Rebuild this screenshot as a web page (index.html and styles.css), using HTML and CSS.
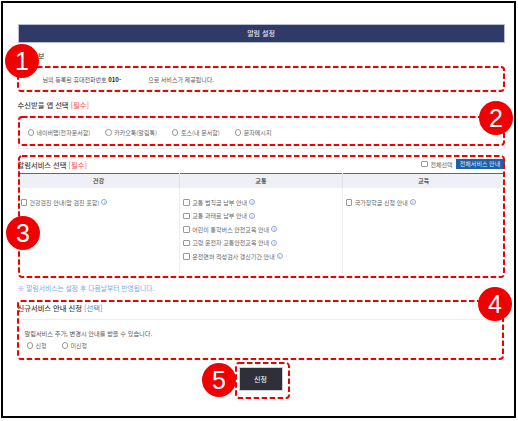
FILE: index.html
```html
<!DOCTYPE html>
<html lang="ko">
<head>
    <meta charset="UTF-8">
    <meta name="viewport" content="width=device-width, initial-scale=1.0">
    <title>알림 설정</title>
    <link rel="stylesheet" href="styles.css">
</head>
<body>

    <div class="frame">
        <h2 class="page-title">알림 설정</h2>

        <h3 class="sec-title first">기본정보</h3>
        <div class="info-box">
            님의 등록된 휴대전화번호 <b>010-</b><span class="phone-gap"></span>으로 서비스가 제공됩니다.
        </div>

        <h3 class="sec-title app">수신받을 앱 선택 <span class="red">[필수]</span></h3>
        <div class="app-box">
            <label class="opt"><input type="radio" name="app">네이버앱(전자문서함)</label>
            <label class="opt"><input type="radio" name="app">카카오톡(알림톡)</label>
            <label class="opt"><input type="radio" name="app">토스(내 문서함)</label>
            <label class="opt"><input type="radio" name="app">문자메시지</label>
        </div>

        <div class="service-head">
            <h3 class="sec-title">알림서비스 선택 <span class="red">[필수]</span></h3>
            <div class="service-tools">
                <label class="opt"><input type="checkbox">전체선택</label>
                <button class="guide-btn">전체서비스 안내</button>
            </div>
        </div>
        <table class="service-table">
            <thead>
                <tr>
                    <th>건강</th>
                    <th>교통</th>
                    <th>교육</th>
                </tr>
            </thead>
            <tbody>
                <tr>
                    <td>
                        <label class="item"><input type="checkbox">건강검진 안내(암 검진 포함) <i class="info">i</i></label>
                    </td>
                    <td>
                        <label class="item"><input type="checkbox">교통 범칙금 납부 안내 <i class="info">i</i></label>
                        <label class="item"><input type="checkbox">교통 과태료 납부 안내 <i class="info">i</i></label>
                        <label class="item"><input type="checkbox">어린이 통학버스 안전교육 안내 <i class="info">i</i></label>
                        <label class="item"><input type="checkbox">고령 운전자 교통안전교육 안내 <i class="info">i</i></label>
                        <label class="item"><input type="checkbox">운전면허 적성검사 갱신기간 안내 <i class="info">i</i></label>
                    </td>
                    <td>
                        <label class="item"><input type="checkbox">국가장학금 신청 안내 <i class="info">i</i></label>
                    </td>
                </tr>
            </tbody>
        </table>
        <p class="notice">※ 알림서비스는 설정 후 다음날부터 반영됩니다.</p>

        <h3 class="sec-title new-title">신규서비스 안내 신청 <span class="blue">[선택]</span></h3>
        <div class="new-box">
            <p class="new-text">알림서비스 추가, 변경시 안내를 받을 수 있습니다.</p>
            <div class="new-opts">
                <label class="opt"><input type="radio" name="news">신청</label>
                <label class="opt"><input type="radio" name="news">미신청</label>
            </div>
        </div>

        <div class="submit-row">
            <button class="submit-btn">신청</button>
        </div>

        <!-- annotations drawn over the screen -->
        <svg class="mark mark1"><rect></rect></svg>
        <svg class="mark mark2"><rect></rect></svg>
        <svg class="mark mark3"><rect></rect></svg>
        <svg class="mark mark4"><rect></rect></svg>
        <svg class="mark mark5"><rect></rect></svg>
        <div class="badge badge1">1</div>
        <div class="badge badge2">2</div>
        <div class="badge badge3">3</div>
        <div class="badge badge4">4</div>
        <div class="badge badge5">5</div>
    </div>

</body>
</html>
```

FILE: styles.css
```css
* {
    box-sizing: border-box;
}
html, body {
    margin: 0;
    padding: 0;
    background: white;
}
body {
    font-family: "Noto Sans CJK KR", "Noto Sans", sans-serif;
    color: #555;
    font-size: 6px;
    width: 518px;
    height: 421px;
    overflow: hidden;
    padding: 1px 0 0 1px;
}
.frame {
    position: relative;
    width: 515px;
    height: 417px;
    border: 2px solid black;
    padding: 21px 9.5px 0 14.5px;
}
.page-title {
    margin: 0;
    height: 19px;
    line-height: 17px;
    background: #303a66;
    border: 1px solid #b9bfd2;
    color: #e8e9f0;
    font-size: 7px;
    font-weight: 500;
    text-align: center;
}
.sec-title {
    margin: 0;
    font-size: 7.3px;
    line-height: 11px;
    font-weight: 500;
    color: #444;
}
.sec-title.first {
    margin-top: 8px;
}
.sec-title.app {
    margin-top: 10px;
}
.red {
    color: #f0524f;
    font-weight: 400;
}
.blue {
    color: #4d86cf;
    font-weight: 400;
}
.info-box {
    margin-top: 5px;
    height: 23px;
    line-height: 23px;
    padding-left: 24px;
    border: 1px solid #f0f0f0;
    color: #555;
}
.info-box b {
    color: #222;
}
.phone-gap {
    display: inline-block;
    width: 27px;
}
.app-box {
    margin-top: 5px;
    height: 33px;
    border: 1px solid #eee;
    padding-left: 9px;
    display: flex;
    align-items: center;
    gap: 15px;
}
.opt {
    display: flex;
    align-items: center;
    color: #666;
    white-space: nowrap;
}
input[type="radio"], input[type="checkbox"] {
    appearance: none;
    margin: 0 2.5px 0 0;
    width: 6.5px;
    height: 6.5px;
    border: 0.7px solid #999;
    background: white;
    flex: none;
}
input[type="radio"] {
    border-radius: 50%;
}
input[type="checkbox"] {
    border-radius: 1px;
}
.service-head {
    margin-top: 6px;
    height: 18px;
    display: flex;
    justify-content: space-between;
    align-items: flex-start;
    padding-top: 5px;
}
.service-tools {
    display: flex;
    align-items: center;
    gap: 3px;
    margin-top: -1px;
}
.guide-btn {
    width: 49px;
    height: 10px;
    padding: 0;
    border: none;
    background: #1f5fa8;
    color: #dfe8f5;
    font-family: inherit;
    font-size: 6px;
    line-height: 10px;
}
.service-table {
    width: 100%;
    height: 100px;
    border-collapse: collapse;
    table-layout: fixed;
    border-top: 1.5px solid #666;
}
.service-table th {
    height: 14px;
    padding: 0;
    background: #eef0f5;
    border-left: 1px solid #dfe1e8;
    font-size: 6.2px;
    font-weight: 500;
    color: #333;
}
.service-table td {
    vertical-align: top;
    padding: 8px 0 0 3px;
    border-left: 1px solid #eee;
}
.service-table th:first-child, .service-table td:first-child {
    border-left: none;
}
.item {
    display: flex;
    align-items: center;
    height: 13.5px;
    color: #666;
    white-space: nowrap;
}
.info {
    display: inline-block;
    width: 6px;
    height: 6px;
    margin-left: 2px;
    border: 0.6px solid #9aa5dc;
    border-radius: 50%;
    color: #6f7fd0;
    font-size: 4.5px;
    line-height: 5px;
    font-style: normal;
    text-align: center;
}
.notice {
    margin: 10px 0 0;
    font-size: 6.8px;
    line-height: 11px;
    color: #7fa9e2;
}
.new-title {
    margin-top: 9px;
}
.new-box {
    margin-top: 5px;
    border-top: 1px solid #eee;
    height: 39px;
    padding: 8px 0 0 7px;
}
.new-text {
    margin: 0;
    font-size: 6.2px;
    line-height: 11px;
    color: #555;
}
.new-opts {
    display: flex;
    gap: 15px;
    margin-top: 1px;
    padding-left: 2px;
    line-height: 11px;
}
.submit-row {
    display: flex;
    justify-content: center;
    margin-top: 9px;
    padding-right: 1px;
}
.submit-btn {
    width: 44px;
    height: 24px;
    padding: 0;
    border: 1px solid #d0d0d4;
    background: #2f2f3a;
    color: #eee;
    font-family: inherit;
    font-size: 7px;
    font-weight: 500;
}
.mark {
    position: absolute;
}
.mark rect {
    x: 1px;
    y: 1px;
    width: calc(100% - 2px);
    height: calc(100% - 2px);
    rx: 3px;
    fill: none;
    stroke: #f00000;
    stroke-width: 2px;
    stroke-dasharray: 5.5px 2.5px;
}
.mark1 { left: 14px; top: 63px; width: 488px; height: 26px; }
.mark2 { left: 15px; top: 113px; width: 487px; height: 30px; }
.mark3 { left: 15px; top: 152px; width: 487px; height: 123px; }
.mark4 { left: 14px; top: 297px; width: 487px; height: 60px; }
.mark5 { left: 232px; top: 359px; width: 55px; height: 37px; }
.badge {
    position: absolute;
    width: 34px;
    height: 34px;
    border-radius: 50%;
    background: #f00000;
    color: white;
    font-family: "Liberation Sans", sans-serif;
    font-size: 25px;
    line-height: 34px;
    text-align: center;
}
.badge1 { left: 2px; top: 41px; }
.badge2 { left: 476px; top: 98px; }
.badge3 { left: 3px; top: 213px; }
.badge4 { left: 475px; top: 284px; }
.badge5 { left: 199px; top: 360px; }
```
